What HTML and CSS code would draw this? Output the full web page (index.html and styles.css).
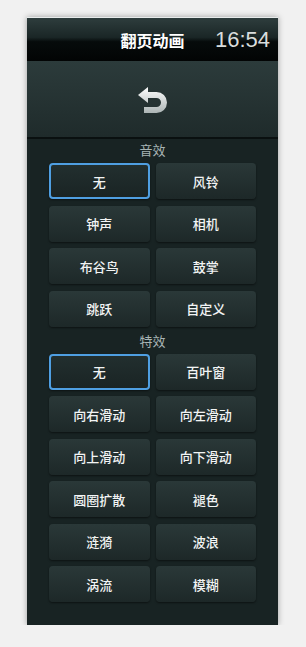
FILE: index.html
```html
<!DOCTYPE html>
<html lang="zh-CN">
<head>
<meta charset="UTF-8">
<title>翻页动画</title>
<link rel="stylesheet" href="styles.css">
</head>
<body>
<div class="phone">
  <!-- barra de título -->
  <div class="titlebar">
    <span></span>
    <span class="title">翻页动画</span>
    <span class="clock">16:54</span>
  </div>

  <!-- barra com botão voltar -->
  <div class="toolbar">
    <svg class="back" width="30" height="27" viewBox="0 0 30 27">
      <defs>
        <linearGradient id="g" x1="0" y1="0" x2="0" y2="27" gradientUnits="userSpaceOnUse">
          <stop offset="0" stop-color="#ffffff"/>
          <stop offset="1" stop-color="#a9b2b2"/>
        </linearGradient>
      </defs>
      <path d="M9 8 H18.5 A7.5 7.5 0 0 1 18.5 23 H6" fill="none" stroke="url(#g)" stroke-width="6"/>
      <polygon points="0,8 10,0 10,16" fill="url(#g)"/>
    </svg>
  </div>

  <div class="section">
    <div class="label">音效</div>
    <div class="grid">
      <div class="btn sel">无</div>
      <div class="btn">风铃</div>
      <div class="btn">钟声</div>
      <div class="btn">相机</div>
      <div class="btn">布谷鸟</div>
      <div class="btn">鼓掌</div>
      <div class="btn">跳跃</div>
      <div class="btn">自定义</div>
    </div>
  </div>

  <div class="section second">
    <div class="label">特效</div>
    <div class="grid">
      <div class="btn sel">无</div>
      <div class="btn">百叶窗</div>
      <div class="btn">向右滑动</div>
      <div class="btn">向左滑动</div>
      <div class="btn">向上滑动</div>
      <div class="btn">向下滑动</div>
      <div class="btn">圆圈扩散</div>
      <div class="btn">褪色</div>
      <div class="btn">涟漪</div>
      <div class="btn">波浪</div>
      <div class="btn">涡流</div>
      <div class="btn">模糊</div>
    </div>
  </div>
</div>
</body>
</html>
```

FILE: styles.css
```css
body{margin:0;background:#f1f1f1;padding:18px 0 0 27px;font-family:"Noto Sans CJK SC","Liberation Sans",sans-serif;}
.phone{
  width:251px;height:607px;background:#182323;
  box-shadow:0 0 6px rgba(0,0,0,.35);border-top:1px solid #e8ecec;margin-top:-1px;
}
.titlebar{
  height:43px;display:grid;grid-template-columns:1fr auto 1fr;align-items:center;
  background:linear-gradient(#2e3d3d,#1a2626 45%,#060b0b 55%,#020404);
}
.title{color:#fff;font-weight:bold;font-size:16px;}
.clock{justify-self:end;padding-right:8px;color:#d9dddd;font-family:"Liberation Sans",sans-serif;font-size:22px;}
.toolbar{
  height:76px;display:flex;align-items:center;justify-content:center;
  background:linear-gradient(#2c3b3b,#1f2b2b);border-bottom:2px solid #0a1010;
}
.back{margin-top:2px;}
.section{padding:0 22px;}
.section.second{margin-top:3px;}
.label{height:24px;line-height:22px;text-align:center;color:#a7b4b4;font-size:13px;}
.grid{display:grid;grid-template-columns:1fr 1fr;grid-auto-rows:36px;column-gap:6px;row-gap:6.5px;}
.btn{
  display:flex;align-items:center;justify-content:center;
  color:#f2f4f4;font-size:13px;font-weight:500;border-radius:4px;
  background:linear-gradient(#2a3838,#1d2828);
  box-shadow:0 1px 2px rgba(0,0,0,.5);
}
.btn.sel{border:2px solid #4f9fe2;background:linear-gradient(#222f2f,#1a2424);}
```
